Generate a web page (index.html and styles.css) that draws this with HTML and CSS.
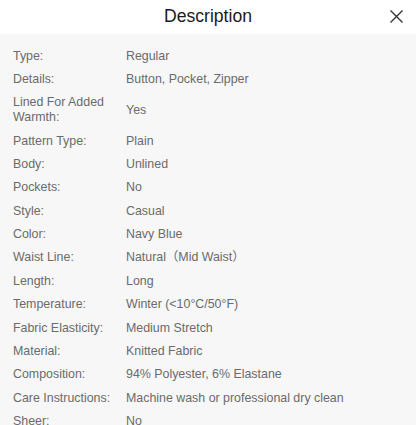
FILE: index.html
```html
<!DOCTYPE html>
<html lang="en">
<head>
<meta charset="utf-8">
<link rel="stylesheet" href="styles.css">
</head>
<body>
<div class="sheet">
  <header class="head">
    <span class="spacer"></span>
    <h1 class="title">Description</h1>
    <button class="close" aria-label="Close">
      <svg width="13" height="13" viewBox="0 0 13 13"><path d="M0.5 0.5 L12.5 12.5 M12.5 0.5 L0.5 12.5" stroke="#333" stroke-width="1.4" fill="none"/></svg>
    </button>
  </header>
  <dl class="attrs">
    <div class="row"><dt>Type:</dt><dd>Regular</dd></div>
    <div class="row"><dt>Details:</dt><dd>Button, Pocket, Zipper</dd></div>
    <div class="row"><dt>Lined For Added Warmth:</dt><dd>Yes</dd></div>
    <div class="row"><dt>Pattern Type:</dt><dd>Plain</dd></div>
    <div class="row"><dt>Body:</dt><dd>Unlined</dd></div>
    <div class="row"><dt>Pockets:</dt><dd>No</dd></div>
    <div class="row"><dt>Style:</dt><dd>Casual</dd></div>
    <div class="row"><dt>Color:</dt><dd>Navy Blue</dd></div>
    <div class="row"><dt>Waist Line:</dt><dd>Natural（Mid Waist）</dd></div>
    <div class="row"><dt>Length:</dt><dd>Long</dd></div>
    <div class="row"><dt>Temperature:</dt><dd>Winter (&lt;10°C/50°F)</dd></div>
    <div class="row"><dt>Fabric Elasticity:</dt><dd>Medium Stretch</dd></div>
    <div class="row"><dt>Material:</dt><dd>Knitted Fabric</dd></div>
    <div class="row"><dt>Composition:</dt><dd>94% Polyester, 6% Elastane</dd></div>
    <div class="row"><dt>Care Instructions:</dt><dd>Machine wash or professional dry clean</dd></div>
    <div class="row"><dt>Sheer:</dt><dd>No</dd></div>
  </dl>
</div>
</body>
</html>
```
FILE: styles.css
```css
* { box-sizing: border-box; }
html, body { margin: 0; padding: 0; }
body {
  font-family: "Liberation Sans", Arial, "Noto Sans CJK SC", sans-serif;
  background: #f7f7f7;
  width: 416px;
  height: 425px;
  overflow: hidden;
}
.sheet { display: flex; flex-direction: column; }
.head {
  height: 34px;
  background: #fff;
  display: grid;
  grid-template-columns: 1fr auto 1fr;
  align-items: center;
  padding: 0 13px 3px 13px;
}
.title {
  margin: 0;
  font-size: 17.6px;
  font-weight: 400;
  color: #1a1a1a;
  line-height: 20px;
}
.close {
  justify-self: end;
  border: 0;
  background: none;
  padding: 0;
  width: 13px;
  height: 13px;
  display: flex;
  margin-top: 1px;
}
.attrs {
  margin: 0;
  padding: 14.5px 13px 0 13px;
  display: flex;
  flex-direction: column;
  gap: 8.5px;
  font-size: 12.4px;
  line-height: 1.2;
  color: #6b6b6b;
}
.row {
  display: grid;
  grid-template-columns: 113px 1fr;
  align-items: center;
}
.row dt { margin: 0; padding-right: 6px; }
.row dd { margin: 0; }
```
